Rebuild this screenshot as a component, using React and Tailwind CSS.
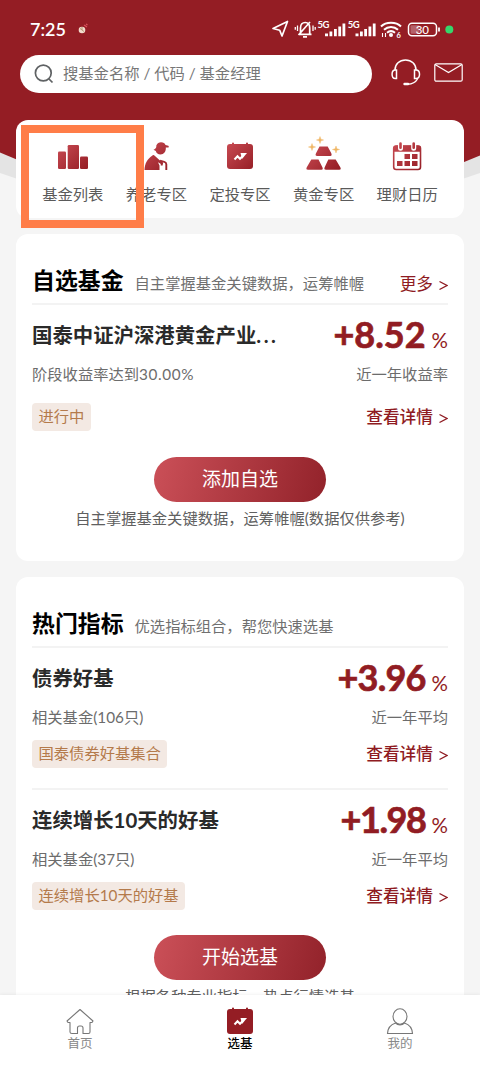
import React from 'react';

const shortcuts = [
  { label: '基金列表', icon: 'bars' },
  { label: '养老专区', icon: 'elder' },
  { label: '定投专区', icon: 'plan' },
  { label: '黄金专区', icon: 'gold' },
  { label: '理财日历', icon: 'calendar' },
];

const indicators = [
  {
    name: '债券好基',
    sub: '相关基金(106只)',
    tag: '国泰债券好基集合',
    value: '+3.96',
    valueClass: 'tracking-[-0.8px]',
    period: '近一年平均',
  },
  {
    name: '连续增长10天的好基',
    sub: '相关基金(37只)',
    tag: '连续增长10天的好基',
    value: '+1.98',
    valueClass: 'tracking-[-1.4px]',
    period: '近一年平均',
  },
];

const PlanShape = ({ fill }) => (
  <>
    <rect x="5" y="5" width="26" height="25" rx="3" fill={fill} />
    <path d="M11 6V4.5M25 6V4.5" stroke={fill} strokeWidth="2" strokeLinecap="round" />
    <path d="M12.5 20.5l3-3.2 2.5 2.5 3-3" fill="none" stroke="#fff" strokeWidth="2" />
    <path d="M18.5 14h6.5l-5 6z" fill="#fff" />
  </>
);

const ShortcutIcon = ({ type }) => {
  const fill = `url(#grad-${type})`;
  return (
    <svg className="h-9 w-9 overflow-visible" viewBox="0 0 36 36">
      <defs>
        <linearGradient id={`grad-${type}`} gradientUnits="userSpaceOnUse" x1="4" y1="4" x2="32" y2="32">
          <stop offset="0" stopColor="#c94b53" />
          <stop offset="1" stopColor="#941d24" />
        </linearGradient>
      </defs>
      {type === 'bars' && (
        <g fill={fill}>
          <rect x="3" y="12.5" width="8" height="17.5" rx="1.3" />
          <rect x="12.7" y="6" width="11.3" height="24" rx="1.3" />
          <rect x="25" y="17.5" width="8" height="12.5" rx="1.3" />
        </g>
      )}
      {type === 'elder' && (
        <g fill={fill}>
          <path d="M15.500 10.800C17.800 10 18.500 8.500 18.300 6.500c1-2.200 2.700-3.200 4.700-3.200 2.500 0 3.800 1 4.500 2.700l2.800.7c.8.7.5 1.900-.3 1.900h-2.200c.4 4-2 7-5.300 7-2.500 0-4.200-1.300-4.700-3.500z" />
          <path d="M6.500 31c.2-6.700 3-11.500 8-14.600.8-.5 1.500-.3 2.200.3l4.700 4.300 3.300 2.800c1 1.200 0 2-1.300 1.400l-3.400-2 1.500 3.300V31z" />
          <path d="M22 21.800l4.300 1c1.500.4 2 1 2 2.400V31M23.700 23v3.500" fill="none" stroke={fill} strokeWidth="1.900" />
        </g>
      )}
      {type === 'plan' && <PlanShape fill={fill} />}
      {type === 'gold' && (
        <>
          <path
            d="M13.500 7.500h8.200l3.600 6.700q1 2.700-1 2.700H11.200q-2.500 0-1.200-2.700zM5.300 20.500h7.200l3.900 7.800q1 2.500-1 2.500H2q-2.400 0-1.200-2.500zM22.300 20.500h7.400l4.600 7.800q1.200 2.500-1 2.500H20q-2.400 0-1.300-2.500z"
            fill={fill}
          />
          <path
            d="M14-2.500l.9 2.700 2.700.8-2.700.8L14 4.500l-.9-2.700-2.700-.8 2.700-.8zM6 4.500l.9 2.700 2.700.8-2.700.8L6 11.500l-.9-2.700L2.400 8l2.700-.8zM30 7l.9 2.700 2.700.8-2.700.8L30 14l-.9-2.700-2.700-.8 2.700-.8z"
            fill="#efb563"
            stroke="#efb563"
            strokeWidth=".4"
          />
        </>
      )}
      {type === 'calendar' && (
        <>
          <rect x="4.700" y="7" width="26.800" height="23.500" rx="2.500" fill="#fff" stroke={fill} strokeWidth="1.600" />
          <path d="M4.500 12.800V9q0-2.500 2.500-2.500h22q3 0 3 2.500v3.800z" fill={fill} />
          <path d="M11.500 4.800v4.500M24.700 4.800v4.500" stroke="#fff" strokeWidth="5" strokeLinecap="round" />
          <path d="M10.200 4.500q0-1.300 1.300-1.300t1.300 1.300v4.300q0 1.300-1.300 1.300t-1.300-1.300zM23.400 4.500q0-1.300 1.300-1.300t1.300 1.300v4.300q0 1.300-1.300 1.300t-1.300-1.300z" fill={fill} />
          <path
            d="M15.500 15H21v5h-5.500zM23 15h5.500v5H23zM8 22h5.500v5H8zM15.500 22H21v5h-5.500zM23 22h5.500v5H23z"
            fill={fill}
          />
        </>
      )}
    </svg>
  );
};

const StatusBar = () => (
  <div className="flex h-[55px] items-center pt-1 pr-[26px] pl-[30px] text-white">
    <span className="-mt-0.5 text-[18px] leading-6 font-semibold">7:25</span>
    <svg className="-mt-px ml-[11px] h-3 w-3" viewBox="0 0 12 12">
      <circle cx="5" cy="7" r="3.300" fill="#f3dccd" />
      <path d="M3 5.500l4 3M5 4v3" stroke="#b39a72" strokeWidth="1" />
      <path d="M7 2l3 2M9 1l1.500 1" stroke="#d9525b" strokeWidth="1.300" />
    </svg>
    <svg className="-mt-0.5 ml-auto h-6 w-[182px] overflow-visible" viewBox="0 0 182 24" fill="none" stroke="#fff">
      <path d="M1 11.500L15.500 4.500 10 19l-2.300-5.800z" strokeWidth="1.700" strokeLinejoin="round" />
      <path d="M26.500 17.300h13M28.500 17v-6c0-3.500 2-5.500 4.700-5.500 2.500 0 4.500 2 4.500 5.500v6M26.500 18L38 5M31 19.800h4" strokeWidth="1.700" />
      <path d="M25.500 8.500v5.500M23.300 10v2.700M41 8.500v5.500M43.200 10v2.700" strokeWidth="1.300" />
      <g fill="#fff" stroke="none">
        <text x="45.500" y="11" fontSize="9.500" fontWeight="700" textLength="12">5G</text>
        <text x="75.700" y="11" fontSize="9.500" fontWeight="700" textLength="12">5G</text>
        <path d="M53 16.500h3v2.700h-3zM57.500 14.500h2.800v4.700h-2.800zM62 12h2.800v7.200H62zM66.300 9.500h2.800v9.700h-2.800zM70.500 6.500h2.800v12.700h-2.800z" />
        <path d="M83.500 16.500h3v2.700h-3zM88 14.500h2.800v4.700H88zM92.200 12H95v7.200h-2.800zM96.500 9.500h2.800v9.700h-2.800zM100.800 6.500h2.800v12.700h-2.800z" />
      </g>
      <path d="M109 9.500c5-5 15-5 20 0M112 12.700c4-3.700 10-3.700 14 0M115 15.700c2.500-2 5.500-2 8 0" strokeWidth="2" />
      <circle cx="119" cy="18" r="2" fill="#fff" stroke="none" />
      <path d="M110.500 16v4M113.500 16v4" strokeWidth="1.100" />
      <text x="124.500" y="20.500" fontSize="7.500" fontWeight="700" fill="#fff" stroke="none">6</text>
      <rect x="136.500" y="6.200" width="28" height="12.500" rx="3.500" strokeWidth="1.500" />
      <rect x="138.500" y="8.200" width="9" height="8.500" rx="1" fill="#b5626a" stroke="none" />
      <path d="M167 10.500v4" strokeWidth="1.800" />
      <text x="143.700" y="16.600" fontSize="11.500" fontWeight="500" fill="#fff" stroke="none">30</text>
      <circle cx="177.300" cy="12.500" r="4" fill="#36d76c" stroke="none" />
    </svg>
  </div>
);

const SearchBar = () => (
  <div className="flex h-[38px] items-center pr-[17px] pl-5">
    <div className="flex h-[38px] w-[352px] items-center rounded-full bg-white pl-[14px] text-[15.3px] text-[#777]">
      <svg className="mr-[9px] h-5 w-5 shrink-0" viewBox="0 0 20 20" fill="none" stroke="#5f6264" strokeWidth="1.700">
        <circle cx="9.300" cy="9" r="7.900" />
        <path d="M15 15l3.500 3.500" />
      </svg>
      <span className="-mt-0.5 whitespace-pre">搜基金名称 / 代码 / 基金经理</span>
    </div>
    <svg className="-mt-1 ml-[18px] h-[30px] w-[32px]" viewBox="0 0 32 30" fill="none" stroke="#fff" strokeWidth="1.500">
      <path d="M5 13C5 7 9.500 3 15.500 3S26 7 26 13M27.500 22c-2 3.500-5 5-10 5.300" />
      <path d="M6.500 13v8.500H5.300C1 21.500 1 13 5.300 13zM24.500 13v8.500h1.500c4.700 0 4.700-8.500 0-8.500z" />
      <path d="M14.500 27h3.500" strokeWidth="2.400" strokeLinecap="round" />
    </svg>
    <svg className="-mt-1 ml-auto h-[19px] w-[29px]" viewBox="0 0 29 19" fill="none" stroke="#fff" strokeWidth="1.200">
      <rect x=".8" y=".8" width="27.400" height="17.400" rx="1.500" />
      <path d="M1 1.500l13.500 8 13.500-8" />
    </svg>
  </div>
);

const Chevron = () => (
  <svg className="mt-0.5 ml-1.5 h-[11px] w-[9px]" viewBox="0 0 9 11" fill="none" stroke="#8f1b22" strokeWidth="1.400">
    <path d="M.5 1.500l7.500 4-7.500 4" />
  </svg>
);

const CardTitle = ({ title, subtitle, more }) => (
  <div className="flex h-[71px] items-center border-b-2 border-[#f3f3f3] pt-6 whitespace-nowrap">
    <h2 className="text-[22.900px] font-bold text-black">{title}</h2>
    <span className="mt-1.5 ml-[11px] text-[15.300px] text-[#707070]">{subtitle}</span>
    {more && (
      <span className="mt-2 ml-auto flex items-center text-[16.700px] text-[#8f1b22]">
        更多
        <Chevron />
      </span>
    )}
  </div>
);

const FundItem = ({ name, sub, tag, value, valueClass, period, tagGap }) => (
  <div className="whitespace-nowrap">
    <div className="flex h-[60px] items-center justify-between">
      <h3 className="pt-px text-[20.400px] font-bold text-[#2a2a2a]">{name}</h3>
      <div className="flex items-baseline pt-1 text-[#911c23]">
        <span className={`font-[Lato] text-[36px] leading-10 font-bold [-webkit-text-stroke:0.7px_#911c23] ${valueClass}`}>
          {value}
        </span>
        <span className="ml-[6px] text-[20.500px] leading-10">%</span>
      </div>
    </div>
    <div className="-mt-px flex h-5 items-center justify-between text-[15.300px] text-[#6c6c6c]">
      <span>{sub}</span>
      <span>{period}</span>
    </div>
    <div className={`flex h-7 items-center justify-between ${tagGap}`}>
      <span className="flex h-7 items-center rounded-[4px] bg-[#f3e9e3] px-[6.500px] pb-px text-[15.300px] text-[#b47a4b]">
        {tag}
      </span>
      <span className="flex items-center pt-0.5 text-[16.700px] font-medium text-[#8f1b22]">
        查看详情
        <Chevron />
      </span>
    </div>
  </div>
);

const ActionButton = ({ children }) => (
  <button className="mx-auto flex h-[45px] w-[172px] items-center justify-center rounded-full bg-linear-[105deg] from-[#cb5058] to-[#92222a] text-[19px] text-white">
    {children}
  </button>
);

const TabBar = () => (
  <nav className="absolute bottom-0 left-0 grid h-[71px] w-full grid-cols-3 bg-white text-[12.500px] leading-4 text-[#888] shadow-[0_-1px_3px_rgba(0,0,0,0.05)]">
    <div className="flex flex-col items-center pt-[10px]">
      <svg className="h-[31px] w-[30px]" viewBox="0 0 30 31" fill="none" stroke="#777" strokeWidth="1.100" strokeLinejoin="round">
        <path d="M2 16L15 4.500 28 16l-1 1.500h-2V27q0 1.500-1.500 1.500H18V23q0-2-2-2h-1.500q-2 0-2 2v5.500H7Q5 28.500 5 27v-9.500H3z" />
      </svg>
      首页
    </div>
    <div className="flex flex-col items-center pt-[10px] font-medium text-black">
      <svg className="h-[31px] w-9" viewBox="0 1 36 31">
        <PlanShape fill="#941d24" />
      </svg>
      选基
    </div>
    <div className="flex flex-col items-center pt-[10px]">
      <svg className="h-[31px] w-[30px]" viewBox="0 0 30 31" fill="none" stroke="#777" strokeWidth="1.100">
        <ellipse cx="15" cy="11.500" rx="7" ry="7.700" />
        <path d="M10.500 18C6 19.500 2.800 22.500 2.500 28.500h25c-.3-6-3.500-9-8-10.500-2.500 2.500-6.500 2.500-9 0z" />
      </svg>
      我的
    </div>
  </nav>
);

const App = () => (
  <div className="relative h-[1066px] w-[480px] overflow-hidden bg-[#f5f5f5] font-[Lato,'Noto_Sans_CJK_SC',sans-serif]">
    <svg className="absolute top-0 left-0 h-[220px] w-[480px]" viewBox="0 0 480 220">
      <path d="M0 0h480v173Q240 260 0 173z" fill="#e4e4e4" />
      <path d="M0 0h480v155.500Q240 260 0 152.500z" fill="#941d24" />
    </svg>

    <div className="relative">
      <StatusBar />
      <SearchBar />

      <div className="relative mx-4 mt-[27px] grid h-[98px] grid-cols-5 rounded-xl bg-white px-[15px]">
        {shortcuts.map((item) => (
          <div key={item.label} className="flex flex-col items-center pt-[19px] text-[15.300px] text-[#5a5a5a]">
            <ShortcutIcon type={item.icon} />
            <span className="mt-[7px] leading-6 whitespace-nowrap">{item.label}</span>
          </div>
        ))}
        <div className="absolute top-[5px] left-[5px] h-[103px] w-[123px] border-8 border-[#ff7d48]" />
      </div>

      <section className="mx-4 mt-4 h-[327px] rounded-xl bg-white px-4">
        <CardTitle title="自选基金" subtitle="自主掌握基金关键数据，运筹帷幄" more />
        <FundItem
          name={
            <>
              国泰中证沪深港黄金产业<span className="tracking-[2.500px]">...</span>
            </>
          }
          sub={
            <>
              阶段收益率达到<span className="tracking-[0.600px]">30.00%</span>
            </>
          }
          tag="进行中"
          value="+8.52"
          valueClass="tracking-normal"
          period="近一年收益率"
          tagGap="mt-[19px]"
        />
        <div className="mt-[26px]">
          <ActionButton>添加自选</ActionButton>
          <p className="mt-1 text-center text-[15.300px] leading-6 whitespace-nowrap text-[#606060]">
            自主掌握基金关键数据，运筹帷幄(数据仅供参考)
          </p>
        </div>
      </section>

      <section className="mx-4 mt-4 h-[520px] rounded-xl bg-white px-4">
        <CardTitle title="热门指标" subtitle="优选指标组合，帮您快速选基" />
        <FundItem {...indicators[0]} tagGap="mt-[13px]" />
        <div className="mt-5 h-0.5 bg-[#f3f3f3]" />
        <FundItem {...indicators[1]} tagGap="mt-[13px]" />
        <div className="mt-[25px]">
          <ActionButton>开始选基</ActionButton>
          <p className="mt-1 text-center text-[15.300px] leading-6 whitespace-nowrap text-[#606060]">
            根据各种专业指标、热点行情选基
          </p>
        </div>
      </section>
    </div>

    <TabBar />
  </div>
);

export default App;
